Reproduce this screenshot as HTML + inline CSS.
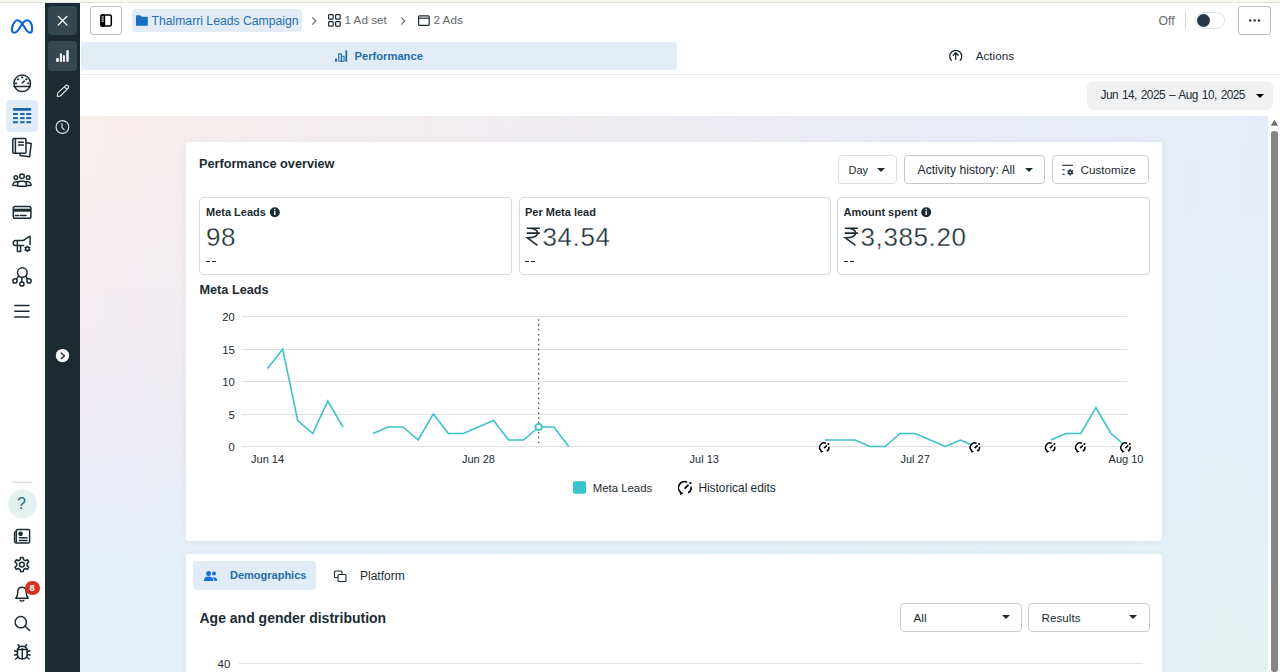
<!DOCTYPE html>
<html><head><meta charset="utf-8">
<style>
*{box-sizing:border-box;margin:0;padding:0}
html,body{width:1280px;height:672px;overflow:hidden;background:#fff;font-family:"Liberation Sans",sans-serif;color:#1c2b33}
.a{position:absolute}
.t{position:absolute;white-space:nowrap;line-height:1}
svg{position:absolute;overflow:visible}
#bg{left:80px;top:116px;width:1188px;height:556px;background:linear-gradient(#f9efed 0%,#f6eef0 22%,#f3edf3 42%,#efecf5 55%,#e6eff9 80%,#e5eff9 100%)}
#bg2{left:80px;top:116px;width:1188px;height:556px;background:linear-gradient(#e5ecf9 0%,#e4eef8 45%,#e5f2f2 100%);-webkit-mask-image:linear-gradient(to right,transparent 0%,#000 100%);mask-image:linear-gradient(to right,transparent 0%,#000 100%)}
.card{position:absolute;background:#fff;border-radius:3px;box-shadow:0 0 8px rgba(30,50,100,0.06)}
.btn{position:absolute;border:1px solid #cbd2d9;border-radius:4px;background:#fff}
.metric{position:absolute;border:1px solid #d3d8dd;border-radius:4px;background:#fff}
.tri{position:absolute;width:0;height:0;border-left:4px solid transparent;border-right:4px solid transparent;border-top:4.5px solid #1c2b33}
</style></head><body>
<!-- top strip -->
<div class="a" style="left:0;top:0;width:1280px;height:2px;background:#f7faf0"></div>
<div class="a" style="left:0;top:2px;width:1280px;height:1px;background:#e2e5dd"></div>

<!-- LEFT NAV -->
<div id="leftnav" class="a" style="left:0;top:3px;width:45px;height:669px;background:#fff">
</div>
<svg width="45" height="672" style="left:0;top:0" viewBox="0 0 45 672" fill="none" stroke="#1c2b33" stroke-width="1.5" stroke-linecap="round" stroke-linejoin="round">
  <!-- meta logo -->
  <path d="M14.5 32.7 C11.8 32.7 11.3 29.5 12.4 26.3 C13.6 22.8 15.4 20.2 17.6 20.2 C20.2 20.2 22.2 23.2 24.4 27 C26.4 30.4 27.9 32.7 30 32.7 C32 32.7 32.1 30.2 32.1 28.2 C32.1 23.6 30 20.2 27.1 20.2 C24.5 20.2 22.4 23.2 20.2 27 C18.3 30.3 16.6 32.7 14.5 32.7 Z" stroke="#0a64d6" stroke-width="2.1"/>
  <!-- gauge -->
  <circle cx="22.2" cy="83.3" r="8.3"/>
  <line x1="14" y1="86.6" x2="30.4" y2="86.6"/>
  <g stroke-width="1.6">
  <line x1="21.7" y1="77.4" x2="22.5" y2="77.4"/><line x1="17.7" y1="79.4" x2="18.5" y2="79.4"/><line x1="25.9" y1="79.4" x2="26.7" y2="79.4"/>
  <line x1="15.7" y1="83.4" x2="16.5" y2="83.4"/><line x1="27.9" y1="83.4" x2="28.7" y2="83.4"/>
  <line x1="22.3" y1="83" x2="24.3" y2="81"/></g>
  <!-- selected table -->
  <rect x="6" y="100" width="32" height="32" rx="4" fill="#e2ecf6" stroke="none"/>
  <g fill="#1b64a6" stroke="none">
  <rect x="13" y="108" width="18.2" height="2.8" rx="0.8"/>
  <rect x="13" y="113" width="4.9" height="2"/><rect x="20.1" y="113" width="4.5" height="2"/><rect x="26.2" y="113" width="5" height="2"/>
  <rect x="13" y="117.1" width="4.9" height="2"/><rect x="20.1" y="117.1" width="4.5" height="2"/><rect x="26.2" y="117.1" width="5" height="2"/>
  <rect x="13" y="121.2" width="4.9" height="2"/><rect x="20.1" y="121.2" width="4.5" height="2"/><rect x="26.2" y="121.2" width="5" height="2"/>
  </g>
  <!-- docs -->
  <path d="M26.2 142.8 L31.2 143.5 L29.6 156.8 L20 155.4 L20 153.4"/>
  <rect x="12.8" y="138.5" width="13.2" height="14.8" rx="1.2"/>
  <line x1="15.4" y1="138.8" x2="15.4" y2="153"/>
  <line x1="18.5" y1="142.2" x2="23.3" y2="142.2"/><line x1="18.5" y1="145" x2="23.3" y2="145"/>
  <!-- people -->
  <circle cx="22" cy="176.3" r="2.3"/>
  <circle cx="15.9" cy="177.6" r="1.8"/>
  <circle cx="28.1" cy="177.6" r="1.8"/>
  <path d="M17.6 186.2 L17.6 184 C17.6 182.4 18.6 181.3 20.2 181.3 L23.8 181.3 C25.4 181.3 26.4 182.4 26.4 184 L26.4 186.2 Z"/>
  <path d="M17.4 185.5 L13.8 185.5 C12.9 185.5 12.6 184.8 13 184 C13.6 182.6 14.6 181.8 16 181.8 L17.8 181.8"/>
  <path d="M26.6 185.5 L30.2 185.5 C31.1 185.5 31.4 184.8 31 184 C30.4 182.6 29.4 181.8 28 181.8 L26.2 181.8"/>
  <!-- card -->
  <rect x="13.3" y="206.6" width="17.6" height="11.6" rx="1.8"/>
  <rect x="13.3" y="208.7" width="17.6" height="3" fill="#1c2b33" stroke="none"/>
  <line x1="15.4" y1="215.6" x2="18.6" y2="215.6"/><line x1="20.4" y1="215.6" x2="26" y2="215.6"/>
  <!-- megaphone -->
  <path d="M30.1 244.6 L30.1 237.2 C30.1 236.4 29.6 236.2 29 236.6 L24.6 239.6 C24 240.2 23.5 240.4 22.8 240.4 L15.6 240.4 C14.2 240.4 13.2 241.6 13.2 242.9 C13.2 244.3 14.2 245.4 15.6 245.4 L23.6 245.4 M17.4 240.4 L17.4 251.4 L20.6 251.4 L20.6 245.4"/>
  <circle cx="27.4" cy="248.8" r="1.8" stroke-width="1.5"/><line x1="27.40" y1="250.70" x2="27.40" y2="252.10" stroke-width="1.5" stroke-linecap="butt"/><line x1="25.75" y1="249.75" x2="24.54" y2="250.45" stroke-width="1.5" stroke-linecap="butt"/><line x1="25.75" y1="247.85" x2="24.54" y2="247.15" stroke-width="1.5" stroke-linecap="butt"/><line x1="27.40" y1="246.90" x2="27.40" y2="245.50" stroke-width="1.5" stroke-linecap="butt"/><line x1="29.05" y1="247.85" x2="30.26" y2="247.15" stroke-width="1.5" stroke-linecap="butt"/><line x1="29.05" y1="249.75" x2="30.26" y2="250.45" stroke-width="1.5" stroke-linecap="butt"/>
  <!-- network -->
  <circle cx="22.3" cy="272.6" r="4.8"/>
  <circle cx="15" cy="280.9" r="2.1"/><circle cx="21.9" cy="284" r="2.1"/><circle cx="29" cy="280.9" r="2.1"/>
  <path d="M21.9 277.4 L21.9 281.9 M18.6 275.8 L16.6 279.2 M26 275.8 L27.4 279.2"/>
  <!-- hamburger -->
  <line x1="14.8" y1="305.5" x2="29" y2="305.5"/><line x1="14.8" y1="311.2" x2="29" y2="311.2"/><line x1="14.8" y1="316.9" x2="29" y2="316.9"/>
  <!-- divider -->
  <line x1="12.2" y1="482.2" x2="32" y2="482.2" stroke="#cdd0d3" stroke-width="1"/>
  <!-- help -->
  <circle cx="22.3" cy="503.9" r="14.4" fill="#e3f1ef" stroke="none"/>
  <!-- news -->
  <rect x="16.3" y="529.5" width="13.3" height="13.6" rx="1.3"/>
  <path d="M16.3 531.3 L14.6 532.5 L14.6 541.5 C14.6 542.5 15.4 543.1 16.3 543.1"/>
  <circle cx="20.6" cy="533.8" r="1.6" fill="#1c2b33"/>
  <line x1="19.3" y1="537.8" x2="27" y2="537.8"/><line x1="19.3" y1="540.4" x2="27" y2="540.4"/>
  <!-- gear -->
  <path d="M20.6 557.6 L23.2 557.6 L23.7 559.8 L25.4 560.7 L27.5 559.8 L28.8 562 L27.1 563.6 L27.1 565.6 L28.8 567.2 L27.5 569.4 L25.4 568.5 L23.7 569.4 L23.2 571.6 L20.6 571.6 L20.1 569.4 L18.4 568.5 L16.3 569.4 L15 567.2 L16.7 565.6 L16.7 563.6 L15 562 L16.3 559.8 L18.4 560.7 L20.1 559.8 Z"/>
  <circle cx="21.9" cy="564.6" r="2.4"/>
  <!-- bell -->
  <path d="M15.8 598.2 L28.2 598.2 C26.6 596.6 26.2 594.6 26.2 592 C26.2 589 24.4 587.2 22 587.2 C19.6 587.2 17.8 589 17.8 592 C17.8 594.6 17.4 596.6 15.8 598.2 Z"/>
  <path d="M20.2 600.2 C20.6 601.3 23.4 601.3 23.8 600.2"/>
  <!-- search -->
  <circle cx="20.8" cy="622.2" r="5.6"/>
  <line x1="24.9" y1="626.3" x2="29.6" y2="630.4"/>
  <!-- bug -->
  <path d="M17.4 651.2 C17.4 647.8 19.4 646.2 22.3 646.2 C25.2 646.2 27.2 647.8 27.2 651.2 L27.2 654.6 C27.2 657.4 25.2 659 22.3 659 C19.4 659 17.4 657.4 17.4 654.6 Z"/>
  <path d="M22.3 648.5 L22.3 658.6 M17.4 649.5 L27.2 649.5 M19.4 646.5 L18 644.8 M25.2 646.5 L26.6 644.8 M17.4 651.8 L14.6 650.8 M27.2 651.8 L30 650.8 M17.4 654.4 L14.6 655 M27.2 654.4 L30 655 M18 657 L15.6 659 M26.6 657 L29 659"/>
</svg>
<div class="t" style="left:17px;top:496px;font-size:16px;color:#1e6b70">?</div>
<div class="a" style="left:25.3px;top:580.5px;width:14.4px;height:14.4px;border-radius:50%;background:#d6311f"></div>
<div class="t" style="left:29.6px;top:583.2px;font-size:9.5px;font-weight:700;color:#fff">8</div>

<!-- DARK SIDEBAR -->
<div class="a" style="left:45px;top:3px;width:35px;height:669px;background:#1c2b33"></div>
<div class="a" style="left:48px;top:6px;width:29px;height:29px;border-radius:4px;background:#344854"></div>
<div class="a" style="left:48px;top:41px;width:29px;height:30px;border-radius:4px;background:#344854"></div>
<svg width="35" height="672" style="left:45px;top:0" viewBox="45 0 35 672" fill="none" stroke="#fff" stroke-width="1.4" stroke-linecap="round" stroke-linejoin="round">
  <path d="M58.2 16.3 L67 25 M67 16.3 L58.2 25" stroke-width="1.2"/>
  <g fill="#fff" stroke="none">
    <rect x="56.2" y="58" width="2.6" height="4" rx="1"/>
    <rect x="59.9" y="53.3" width="2.1" height="8.7" rx="0.9"/>
    <rect x="63" y="55" width="1.9" height="7" rx="0.9"/>
    <rect x="66.3" y="50" width="2.4" height="12" rx="1"/>
  </g>
  <path d="M57.3 96.4 L57.6 93.2 L65.6 85.6 C66.2 85 67.2 85 67.8 85.6 L68.2 86 C68.8 86.6 68.8 87.6 68.2 88.2 L60.4 96 Z M64.4 86.8 L67 89.4" stroke="#e9ecee" stroke-width="1.1"/>
  <circle cx="62.4" cy="127" r="6.4" stroke="#e9ecee" stroke-width="1.1"/>
  <path d="M62 123.6 L62 127.6 L64.2 129.6" stroke="#e9ecee" stroke-width="1.1"/>
  <circle cx="62.5" cy="355.6" r="6.7" fill="#fff" stroke="none"/>
  <path d="M61.2 353 L64.6 355.8 L61.2 358.6" stroke="#1c2b33" stroke-width="1.3"/>
</svg>

<!-- TOP BAR -->
<div class="a" style="left:90px;top:6px;width:32px;height:29px;border:1px solid #bcc1c6;border-radius:3px"></div>
<svg width="14" height="14" style="left:99px;top:13px" viewBox="99 13 14 14">
  <rect x="100.9" y="15" width="10.4" height="11" rx="1.6" fill="#fff" stroke="#000" stroke-width="1.5"/>
  <rect x="100.2" y="14.3" width="5" height="12.4" rx="1.6" fill="#000"/>
  <rect x="101.5" y="16.4" width="2.3" height="1.1" fill="#fff"/><rect x="101.5" y="18.5" width="2.3" height="1.1" fill="#fff"/><rect x="101.5" y="20.6" width="2.3" height="1.1" fill="#fff"/>
</svg>
<div class="a" style="left:132px;top:9px;width:170px;height:23px;border-radius:4px;background:#e2ecf6"></div>
<svg width="13" height="11" style="left:136px;top:15px" viewBox="136 15 13 11"><path d="M136 15.3 L140.3 15.3 L141.6 16.8 L147.8 16.8 L147.8 25.8 L136 25.8 Z" fill="#1570c4"/></svg>
<div class="t" style="left:151.5px;top:15px;font-size:12.2px;color:#256fb0">Thalmarri Leads Campaign</div>
<svg width="10" height="10" style="left:310px;top:15px" viewBox="310 15 10 10" fill="none" stroke="#606770" stroke-width="1.1"><path d="M312.2 17.4 L315.8 21 L312.2 24.6"/></svg>
<svg width="14" height="14" style="left:327px;top:13px" viewBox="327 13 14 14" fill="none" stroke="#1c2b33" stroke-width="1.2"><rect x="328.6" y="14.6" width="4.6" height="4.6" rx="0.8"/><rect x="335.6" y="14.6" width="4.6" height="4.6" rx="0.8"/><rect x="328.6" y="21.6" width="4.6" height="4.6" rx="0.8"/><rect x="335.6" y="21.6" width="4.6" height="4.6" rx="0.8"/></svg>
<div class="t" style="left:344.5px;top:14.3px;font-size:11.7px;color:#65676b">1 Ad set</div>
<svg width="10" height="10" style="left:399px;top:15px" viewBox="399 15 10 10" fill="none" stroke="#606770" stroke-width="1.1"><path d="M401.2 17.4 L404.8 21 L401.2 24.6"/></svg>
<svg width="14" height="14" style="left:417px;top:13px" viewBox="417 13 14 14" fill="none" stroke="#1c2b33" stroke-width="1.2"><rect x="418.6" y="15.8" width="10.6" height="9.6" rx="1"/><line x1="419" y1="18.2" x2="429" y2="18.2"/></svg>
<div class="t" style="left:433.5px;top:14.3px;font-size:11.7px;color:#65676b">2 Ads</div>

<div class="t" style="left:1158.5px;top:15px;font-size:12.2px;color:#65676b">Off</div>
<div class="a" style="left:1185px;top:12px;width:1px;height:17px;background:#d5d8db"></div>
<div class="a" style="left:1195px;top:11.5px;width:30px;height:17px;border:1px solid #dde0e3;border-radius:9px;background:#fff"></div>
<div class="a" style="left:1197px;top:13.8px;width:13px;height:13px;border-radius:50%;background:#243746"></div>
<div class="a" style="left:1238px;top:6px;width:33px;height:29px;border:1px solid #bcc0c4;border-radius:3px;background:#fff"></div>
<svg width="14" height="6" style="left:1248px;top:17px" viewBox="1248 17 14 6" fill="#1c2b33"><circle cx="1250.2" cy="20.4" r="1.2"/><circle cx="1254.6" cy="20.4" r="1.2"/><circle cx="1259" cy="20.4" r="1.2"/></svg>

<!-- TABS -->
<div class="a" style="left:81px;top:42px;width:596px;height:28px;background:#e1ecf6;border-radius:2px 4px 4px 2px"></div>
<svg width="14" height="14" style="left:334px;top:49px" viewBox="334 49 14 14" fill="none" stroke="#1b68ad" stroke-width="1.1"><rect x="335" y="58.6" width="2" height="3.1" fill="#1b68ad" stroke="none"/><rect x="338.7" y="53.9" width="2.7" height="7.3" rx="0.5"/><rect x="341.4" y="56.3" width="2.7" height="4.9" rx="0.5"/><line x1="346.3" y1="50.4" x2="346.3" y2="61.7" stroke-width="1.7"/></svg>
<div class="t" style="left:354.5px;top:50.5px;font-size:11.2px;font-weight:700;color:#1e6cae">Performance</div>
<svg width="16" height="16" style="left:948px;top:48px" viewBox="948 48 16 16" fill="none" stroke="#1c2b33" stroke-width="1.3" stroke-linecap="round"><path d="M951.3 60.4 A6 6 0 1 1 960.2 60.4"/><path d="M955.7 59.4 L955.7 52.8 M953.2 55.2 L955.7 52.7 L958.2 55.2"/></svg>
<div class="t" style="left:975.7px;top:50.4px;font-size:11.7px;color:#1c2b33">Actions</div>
<div class="a" style="left:81px;top:74px;width:1199px;height:1px;background:#ebe9e4"></div>

<!-- DATE -->
<div class="a" style="left:1087px;top:81px;width:186px;height:28.5px;background:#f0f1f2;border-radius:6px"></div>
<div class="t" style="left:1100.5px;top:89.8px;font-size:11.9px;letter-spacing:-0.55px;word-spacing:1.2px;color:#1c2b33">Jun 14, 2025 – Aug 10, 2025</div>
<div class="tri" style="left:1255.5px;top:93.5px;border-top-color:#000"></div>

<!-- BACKGROUND -->
<div id="bg" class="a"></div><div id="bg2" class="a"></div>
<div class="a" style="left:1268px;top:116px;width:12px;height:556px;background:#fff"></div>
<svg width="10" height="10" style="left:1270px;top:117px" viewBox="1270 117 10 10"><path d="M1270.8 125.8 L1274.4 119.8 L1278 125.8 Z" fill="#6e6e6e"/></svg>
<div class="a" style="left:1271px;top:131px;width:7px;height:541px;background:#858585;border-radius:3px"></div>

<!-- CARD 1 -->
<div class="card" style="left:186px;top:142px;width:976px;height:399px"></div>
<div class="t" style="left:199px;top:158px;font-size:12.7px;font-weight:700;color:#1c2b33">Performance overview</div>
<div class="btn" style="left:838px;top:155px;width:59px;height:29px;border-color:#dadde1"></div>
<div class="t" style="left:848.5px;top:164.8px;font-size:11px;color:#1c2b33">Day</div>
<div class="tri" style="left:877px;top:168px"></div>
<div class="btn" style="left:904px;top:155px;width:141px;height:29px;border-color:#c4c8cd"></div>
<div class="t" style="left:917.5px;top:164.3px;font-size:12.2px;color:#1c2b33">Activity history: All</div>
<div class="tri" style="left:1025px;top:168px"></div>
<div class="btn" style="left:1052px;top:155px;width:97px;height:29px;border-color:#cdd1d5"></div>
<svg width="14" height="12" style="left:1061px;top:164px" viewBox="1061 164 14 12" fill="none" stroke="#1c2b33" stroke-width="1.1"><line x1="1062.3" y1="165.3" x2="1073" y2="165.3"/><line x1="1062.3" y1="169.8" x2="1064.6" y2="169.8"/><line x1="1062.3" y1="174.3" x2="1064.6" y2="174.3"/><circle cx="1070.3" cy="172.3" r="1.6" stroke-width="1.5"/><line x1="1070.30" y1="174.10" x2="1070.30" y2="175.50" stroke-width="1.5"/><line x1="1068.74" y1="173.20" x2="1067.53" y2="173.90" stroke-width="1.5"/><line x1="1068.74" y1="171.40" x2="1067.53" y2="170.70" stroke-width="1.5"/><line x1="1070.30" y1="170.50" x2="1070.30" y2="169.10" stroke-width="1.5"/><line x1="1071.86" y1="171.40" x2="1073.07" y2="170.70" stroke-width="1.5"/><line x1="1071.86" y1="173.20" x2="1073.07" y2="173.90" stroke-width="1.5"/></svg>
<div class="t" style="left:1080.5px;top:164.2px;font-size:11.7px;color:#1c2b33">Customize</div>

<!-- METRICS -->
<div class="metric" style="left:199px;top:197px;width:312.5px;height:77.5px"></div>
<div class="metric" style="left:518.5px;top:197px;width:312.5px;height:77.5px"></div>
<div class="metric" style="left:837px;top:197px;width:312.5px;height:77.5px"></div>
<div class="t" style="left:206px;top:206.5px;font-size:11px;font-weight:700">Meta Leads</div>
<svg width="12" height="12" style="left:269px;top:206px" viewBox="269 206 12 12"><circle cx="274.8" cy="212.3" r="5" fill="#1c2b33"/><rect x="274.15" y="211" width="1.3" height="4" fill="#fff"/><circle cx="274.8" cy="209.6" r="0.8" fill="#fff"/></svg>
<div class="t" style="left:206px;top:224px;font-size:26px;letter-spacing:0.6px;color:#1c2b33;-webkit-text-stroke:0.35px #fff">98</div>
<div class="a" style="left:206px;top:260.8px;width:4.3px;height:1.3px;background:#1c2b33"></div><div class="a" style="left:211.7px;top:260.8px;width:4.3px;height:1.3px;background:#1c2b33"></div>

<div class="t" style="left:525px;top:206.5px;font-size:11px;font-weight:700">Per Meta lead</div>
<svg width="16" height="20" style="left:526px;top:227px" viewBox="526 227 16 20" fill="none" stroke="#1c2b33" stroke-width="1.6"><path d="M526.8 228.3 L539.9 228.3 M526.8 233.1 L539.9 233.1 M527.5 228.3 C533.5 228.3 537.6 229.6 537.6 233 C537.6 236.3 534 237.9 527.4 237.9 L537.4 245.4"/></svg>
<div class="t" style="left:542.5px;top:224px;font-size:26px;letter-spacing:0.6px;color:#1c2b33;-webkit-text-stroke:0.35px #fff">34.54</div>
<div class="a" style="left:525.2px;top:260.8px;width:4.3px;height:1.3px;background:#1c2b33"></div><div class="a" style="left:530.9px;top:260.8px;width:4.3px;height:1.3px;background:#1c2b33"></div>

<div class="t" style="left:843.5px;top:206.5px;font-size:11px;font-weight:700">Amount spent</div>
<svg width="12" height="12" style="left:920px;top:206px" viewBox="920 206 12 12"><circle cx="926.2" cy="212.3" r="5" fill="#1c2b33"/><rect x="925.55" y="211" width="1.3" height="4" fill="#fff"/><circle cx="926.2" cy="209.6" r="0.8" fill="#fff"/></svg>
<svg width="16" height="20" style="left:844px;top:227px" viewBox="526 227 16 20" fill="none" stroke="#1c2b33" stroke-width="1.6"><path d="M526.8 228.3 L539.9 228.3 M526.8 233.1 L539.9 233.1 M527.5 228.3 C533.5 228.3 537.6 229.6 537.6 233 C537.6 236.3 534 237.9 527.4 237.9 L537.4 245.4"/></svg>
<div class="t" style="left:860.5px;top:224px;font-size:26px;letter-spacing:0.6px;color:#1c2b33;-webkit-text-stroke:0.35px #fff">3,385.20</div>
<div class="a" style="left:844px;top:260.8px;width:4.3px;height:1.3px;background:#1c2b33"></div><div class="a" style="left:849.7px;top:260.8px;width:4.3px;height:1.3px;background:#1c2b33"></div>

<!-- CHART -->
<div class="t" style="left:199.5px;top:284px;font-size:12.7px;font-weight:700">Meta Leads</div>
<!--CHART-->
<svg width="1280" height="672" style="left:0;top:0" viewBox="0 0 1280 672">
<line x1="242" y1="446.5" x2="1127" y2="446.5" stroke="#dcdfe3" stroke-width="1"/>
<line x1="242" y1="414.5" x2="1127" y2="414.5" stroke="#dcdfe3" stroke-width="1"/>
<line x1="242" y1="381.5" x2="1127" y2="381.5" stroke="#dcdfe3" stroke-width="1"/>
<line x1="242" y1="349.5" x2="1127" y2="349.5" stroke="#dcdfe3" stroke-width="1"/>
<line x1="242" y1="316.5" x2="1127" y2="316.5" stroke="#dcdfe3" stroke-width="1"/>
<line x1="538.7" y1="316.5" x2="538.7" y2="446" stroke="#444" stroke-width="1.2" stroke-dasharray="1.6 3.3" stroke-dashoffset="2.2"/>
<polyline points="267.6,368.5 282.7,349.0 297.7,420.5 312.8,433.5 327.8,401.0 342.9,427.0" fill="none" stroke="#3cc3c9" stroke-width="1.6" stroke-linejoin="miter" stroke-linecap="butt"/>
<polyline points="373.0,433.5 388.1,427.0 403.1,427.0 418.2,440.0 433.3,414.0 448.3,433.5 463.4,433.5 478.4,427.0 493.5,420.5 508.6,440.0 523.6,440.0 538.7,427.0 553.7,427.0 568.8,446.5" fill="none" stroke="#3cc3c9" stroke-width="1.6" stroke-linejoin="miter" stroke-linecap="butt"/>
<polyline points="824.8,440.0 839.9,440.0 854.9,440.0 870.0,446.5 885.1,446.5 900.1,433.5 915.2,433.5 930.2,440.0 945.3,446.5 960.4,440.0 975.4,446.5" fill="none" stroke="#3cc3c9" stroke-width="1.6" stroke-linejoin="miter" stroke-linecap="butt"/>
<polyline points="1050.7,440.0 1065.8,433.5 1080.8,433.5 1095.9,407.5 1111.0,433.5 1126.0,446.5" fill="none" stroke="#3cc3c9" stroke-width="1.6" stroke-linejoin="miter" stroke-linecap="butt"/>
<circle cx="538.7" cy="427.0" r="3.2" fill="#fff" stroke="#3cc3c9" stroke-width="1.8"/>
<g transform="translate(824.8,447.5) scale(0.74)"><circle r="6.8" fill="#fff"/><path d="M-4.6 4.6 A6 6 0 0 1 1.6 -5.6" fill="none" stroke="#000" stroke-width="2"/><path d="M5.5 -1.2 A5.8 5.8 0 0 1 2.6 5" fill="none" stroke="#000" stroke-width="2"/><path d="M-6.2 3.4 L-1.8 5.4 L-5.2 7.2 Z" fill="#000"/><path d="M-0.9 0.8 L3 -3" stroke="#000" stroke-width="2.2"/><circle cx="5" cy="-4.7" r="1.4" fill="#000"/></g>
<g transform="translate(975.4,447.5) scale(0.74)"><circle r="6.8" fill="#fff"/><path d="M-4.6 4.6 A6 6 0 0 1 1.6 -5.6" fill="none" stroke="#000" stroke-width="2"/><path d="M5.5 -1.2 A5.8 5.8 0 0 1 2.6 5" fill="none" stroke="#000" stroke-width="2"/><path d="M-6.2 3.4 L-1.8 5.4 L-5.2 7.2 Z" fill="#000"/><path d="M-0.9 0.8 L3 -3" stroke="#000" stroke-width="2.2"/><circle cx="5" cy="-4.7" r="1.4" fill="#000"/></g>
<g transform="translate(1050.7,447.5) scale(0.74)"><circle r="6.8" fill="#fff"/><path d="M-4.6 4.6 A6 6 0 0 1 1.6 -5.6" fill="none" stroke="#000" stroke-width="2"/><path d="M5.5 -1.2 A5.8 5.8 0 0 1 2.6 5" fill="none" stroke="#000" stroke-width="2"/><path d="M-6.2 3.4 L-1.8 5.4 L-5.2 7.2 Z" fill="#000"/><path d="M-0.9 0.8 L3 -3" stroke="#000" stroke-width="2.2"/><circle cx="5" cy="-4.7" r="1.4" fill="#000"/></g>
<g transform="translate(1080.8,447.5) scale(0.74)"><circle r="6.8" fill="#fff"/><path d="M-4.6 4.6 A6 6 0 0 1 1.6 -5.6" fill="none" stroke="#000" stroke-width="2"/><path d="M5.5 -1.2 A5.8 5.8 0 0 1 2.6 5" fill="none" stroke="#000" stroke-width="2"/><path d="M-6.2 3.4 L-1.8 5.4 L-5.2 7.2 Z" fill="#000"/><path d="M-0.9 0.8 L3 -3" stroke="#000" stroke-width="2.2"/><circle cx="5" cy="-4.7" r="1.4" fill="#000"/></g>
<g transform="translate(1126.0,447.5) scale(0.74)"><circle r="6.8" fill="#fff"/><path d="M-4.6 4.6 A6 6 0 0 1 1.6 -5.6" fill="none" stroke="#000" stroke-width="2"/><path d="M5.5 -1.2 A5.8 5.8 0 0 1 2.6 5" fill="none" stroke="#000" stroke-width="2"/><path d="M-6.2 3.4 L-1.8 5.4 L-5.2 7.2 Z" fill="#000"/><path d="M-0.9 0.8 L3 -3" stroke="#000" stroke-width="2.2"/><circle cx="5" cy="-4.7" r="1.4" fill="#000"/></g>
<rect x="573" y="481.2" width="13" height="12.6" rx="2" fill="#35c4cb"/>
<g transform="translate(685.5,487.8)"><path d="M-4.6 4.6 A6 6 0 0 1 1.6 -5.6" fill="none" stroke="#000" stroke-width="1.6"/><path d="M5.5 -1.2 A5.8 5.8 0 0 1 2.6 5" fill="none" stroke="#000" stroke-width="1.6"/><path d="M-6.2 3.4 L-1.8 5.4 L-5.2 7.2 Z" fill="#000"/><path d="M-0.9 0.8 L3 -3" stroke="#000" stroke-width="1.8"/><circle cx="5" cy="-4.7" r="1.1199999999999999" fill="#000"/></g>
</svg>
<div class="t" style="left:185px;width:49.8px;text-align:right;top:442.1px;font-size:11.3px;color:#1c2b33">0</div>
<div class="t" style="left:185px;width:49.8px;text-align:right;top:409.6px;font-size:11.3px;color:#1c2b33">5</div>
<div class="t" style="left:185px;width:49.8px;text-align:right;top:377.1px;font-size:11.3px;color:#1c2b33">10</div>
<div class="t" style="left:185px;width:49.8px;text-align:right;top:344.6px;font-size:11.3px;color:#1c2b33">15</div>
<div class="t" style="left:185px;width:49.8px;text-align:right;top:312.1px;font-size:11.3px;color:#1c2b33">20</div>
<div class="t" style="left:227.6px;width:80px;text-align:center;top:453.5px;font-size:11px;color:#1c2b33">Jun 14</div>
<div class="t" style="left:438.4px;width:80px;text-align:center;top:453.5px;font-size:11px;color:#1c2b33">Jun 28</div>
<div class="t" style="left:664.3px;width:80px;text-align:center;top:453.5px;font-size:11px;color:#1c2b33">Jul 13</div>
<div class="t" style="left:875.2px;width:80px;text-align:center;top:453.5px;font-size:11px;color:#1c2b33">Jul 27</div>
<div class="t" style="left:1086.0px;width:80px;text-align:center;top:453.5px;font-size:11px;color:#1c2b33">Aug 10</div>
<div class="t" style="left:592.7px;top:482.6px;font-size:11.4px;color:#1c2b33">Meta Leads</div>
<div class="t" style="left:698.4px;top:483px;font-size:11.9px;color:#1c2b33">Historical edits</div>
<!--/CHART-->

<!-- CARD 2 -->
<div class="card" style="left:186px;top:554px;width:976px;height:130px"></div>
<div class="a" style="left:193px;top:561px;width:123px;height:28.5px;background:#e1ecf6;border-radius:4px"></div>
<svg width="16" height="12" style="left:203px;top:570px" viewBox="203 570 16 12" fill="#1a72d6"><circle cx="208.6" cy="573.4" r="2.5"/><circle cx="214" cy="573.6" r="2"/><path d="M203.8 581 C203.8 578 205.6 576.6 208.6 576.6 C211.6 576.6 213.4 578 213.4 581 Z"/><path d="M214.4 581 L217.3 581 C217.3 578.4 216 577.2 213.8 577.2 C213.3 577.2 212.9 577.3 212.6 577.4 C213.8 578.4 214.4 579.6 214.4 581 Z"/></svg>
<div class="t" style="left:230px;top:570px;font-size:11px;font-weight:700;color:#1e6cae">Demographics</div>
<svg width="14" height="14" style="left:333px;top:569px" viewBox="333 569 14 14" fill="none" stroke="#1c2b33" stroke-width="1.1"><rect x="334.5" y="571" width="7.5" height="6.5" rx="1"/><rect x="338" y="574.5" width="8" height="7" rx="1" fill="#fff"/></svg>
<div class="t" style="left:360px;top:569.5px;font-size:12px;color:#1c2b33">Platform</div>
<div class="t" style="left:199.5px;top:611px;font-size:14px;font-weight:700">Age and gender distribution</div>
<div class="btn" style="left:900px;top:602.5px;width:121.5px;height:29px;border-color:#c9cdd2"></div>
<div class="t" style="left:913.5px;top:612px;font-size:11.7px">All</div>
<div class="tri" style="left:1001.5px;top:615px"></div>
<div class="btn" style="left:1028px;top:602.5px;width:121.5px;height:29px;border-color:#c9cdd2"></div>
<div class="t" style="left:1041.5px;top:612px;font-size:11.7px">Results</div>
<div class="tri" style="left:1129px;top:615px"></div>
<div class="t" style="left:217.5px;top:658.5px;font-size:11.5px">40</div>
<div class="a" style="left:239px;top:663px;width:904px;height:1px;background:#dfe2e5"></div>
</body></html>
